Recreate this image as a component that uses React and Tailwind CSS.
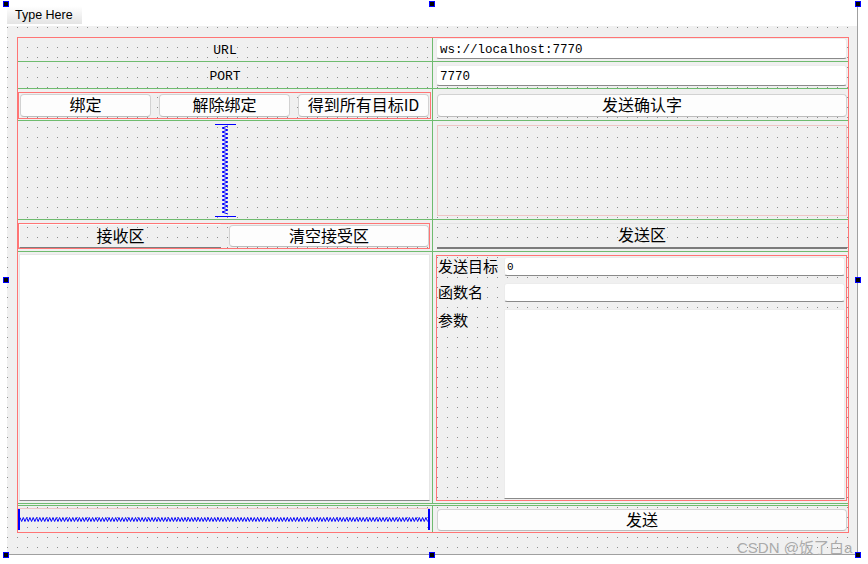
import React from "react";

const cjk = "font-['Noto_Sans_CJK_SC','Liberation_Sans',sans-serif]";
const mono = "font-['Liberation_Mono','Noto_Sans_CJK_SC',monospace]";

function Btn({ children, className = "" }) {
  return (
    <div
      className={
        "flex items-center justify-center pb-[3px] bg-[#fdfdfd] border border-[#d2d2d2] border-b-[#bcbcbc] rounded-[4px] text-[16px] leading-none text-black " +
        cjk +
        " " +
        className
      }
    >
      {children}
    </div>
  );
}

function LineEdit({ children, className = "" }) {
  return (
    <div
      className={
        "flex items-center bg-white border border-[#ececec] border-b-[#8a8a8a] rounded-[3px] text-black " +
        className
      }
    >
      {children}
    </div>
  );
}

function Handle({ className }) {
  return <div className={"absolute w-[6px] h-[6px] bg-black border border-[#0000ff] " + className} />;
}

function VSpacer() {
  const pts = [];
  for (let y = 3; y <= 92; y += 2) pts.push(`${y % 4 === 1 ? 7 : 13},${y}`);
  return (
    <svg width="21" height="95" viewBox="0 0 21 95" className="block">
      <line x1="0" y1="1.5" x2="21" y2="1.5" stroke="#0000ff" strokeWidth="1" />
      <line x1="0" y1="93.5" x2="21" y2="93.5" stroke="#0000ff" strokeWidth="1" />
      <polyline points={pts.join(" ")} fill="none" stroke="#0000ff" strokeWidth="1" />
    </svg>
  );
}

function HSpacer() {
  const pts = [];
  let up = true;
  for (let x = 2; x <= 410; x += 1.65) {
    pts.push(`${x.toFixed(2)},${up ? 8.5 : 12.5}`);
    up = !up;
  }
  return (
    <svg width="412" height="21" viewBox="0 0 412 21" className="block">
      <line x1="1" y1="0" x2="1" y2="21" stroke="#0000ff" strokeWidth="2" />
      <line x1="411" y1="0" x2="411" y2="21" stroke="#0000ff" strokeWidth="2" />
      <polyline points={pts.join(" ")} fill="none" stroke="#0000ff" strokeWidth="1" />
    </svg>
  );
}

const Hline = () => <div className="h-px bg-[#6fbb6f]" />;
const Vline = () => <div className="w-px bg-[#6fbb6f]" />;

export default function App() {
  return (
    <div className="relative w-[868px] h-[564px] bg-white overflow-hidden">
      <div className="ml-[6px] mt-[5px] w-[852px] h-[550px] pl-px border-r border-b border-[#a0a0a0] flex flex-col">
        {/* menu bar */}
        <div className="h-[21px] shrink-0">
          <div className="mt-px w-[75px] h-[18px] bg-gradient-to-b from-white to-[#e4e4e4] pl-[8px] flex items-center text-[12.5px] text-black font-['Liberation_Sans',sans-serif]">
            Type Here
          </div>
        </div>

        {/* designer canvas */}
        <div className="flex-1 bg-[#f0f0f0] bg-[conic-gradient(at_1px_1px,transparent_0_270deg,#8e8e8e_270deg)] bg-[length:10px_10px] bg-[position:0px_1px] pl-[10px] pt-[11px]">
          <div className="w-[832px] h-[496px] border border-[#ff7575] flex flex-col">
            {/* URL */}
            <div className="flex h-[23px]">
              <div className={"w-[414px] flex items-center justify-center pt-[3px] text-[13px] text-black " + mono}>URL</div>
              <Vline />
              <div className="flex-1">
                <LineEdit className={"ml-[3px] w-[411px] h-[21px] pl-[3px] pt-[3px] text-[12.5px] " + mono}>ws://localhost:7770</LineEdit>
              </div>
            </div>
            <Hline />

            {/* PORT */}
            <div className="flex h-[26px]">
              <div className={"w-[414px] flex items-center justify-center pt-[3px] text-[13px] text-black " + mono}>PORT</div>
              <Vline />
              <div className="flex-1">
                <LineEdit className={"ml-[3px] mt-[3px] w-[411px] h-[21px] pl-[3px] pt-[3px] text-[12.5px] " + mono}>7770</LineEdit>
              </div>
            </div>
            <Hline />

            {/* buttons */}
            <div className="flex h-[31px]">
              <div className="w-[414px]">
                <div className="mt-[3px] w-[413px] h-[27px] border border-[#ff7575] flex gap-[8px] px-px py-px">
                  <Btn className="flex-1">绑定</Btn>
                  <Btn className="flex-1">解除绑定</Btn>
                  <Btn className="flex-1">得到所有目标ID</Btn>
                </div>
              </div>
              <Vline />
              <div className="flex-1">
                <Btn className="ml-[4px] mt-[5px] w-[410px] h-[23px]">发送确认字</Btn>
              </div>
            </div>
            <Hline />

            {/* spacer row */}
            <div className="flex h-[98px]">
              <div className="w-[414px] flex justify-center pt-[2px]">
                <VSpacer />
              </div>
              <Vline />
              <div className="flex-1">
                <div className="ml-[4px] mt-[4px] w-[410px] h-[91px] border border-[#eec6c6]" />
              </div>
            </div>
            <Hline />

            {/* section titles */}
            <div className="flex h-[31px]">
              <div className="w-[414px]">
                <div className="mt-[3px] w-[412px] h-[26px] border border-[#ff7575] flex">
                  <div className={"w-[202px] h-full pb-[3px] border-t border-l border-[#fafafa] border-b border-b-[#7c7c7c] flex items-center justify-center text-[16px] leading-none text-black " + cjk}>
                    接收区
                  </div>
                  <Btn className="ml-[8px] mt-px w-[200px] h-[22px]">清空接受区</Btn>
                </div>
              </div>
              <Vline />
              <div className="flex-1">
                <div className={"ml-[4px] mt-[3px] w-[410px] h-[26px] pb-[3px] border-t border-[#e2e2e2] border-b-2 border-b-[#7c7c7c] flex items-center justify-center text-[16px] leading-none text-black " + cjk}>
                  发送区
                </div>
              </div>
            </div>
            <Hline />

            {/* text areas */}
            <div className="flex h-[251px]">
              <div className="w-[414px]">
                <div className="ml-px mt-[2px] w-[411px] h-[247px] bg-white border border-[#e6e6e6] border-b-[#8a8a8a]" />
              </div>
              <Vline />
              <div className="flex-1">
                <div className={"ml-[3px] mt-[3px] w-[411px] h-[246px] border border-[#ff7575] grid grid-cols-[67px_341px] content-start pt-px text-[15px] leading-none text-black " + cjk}>
                  <div className="h-[19px] pl-px pb-[3px] flex items-center">发送目标</div>
                  <LineEdit className={"h-[19px] pl-[2px] pt-[2px] text-[11px] " + mono}>0</LineEdit>
                  <div className="h-[7px]" />
                  <div className="h-[7px]" />
                  <div className="h-[19px] pl-px pb-[3px] flex items-center">函数名</div>
                  <LineEdit className="h-[19px]" />
                  <div className="h-[7px]" />
                  <div className="h-[7px]" />
                  <div className="pl-px pt-[3px]">参数</div>
                  <div className="h-[190px] bg-white border border-[#ececec] border-b-[#8a8a8a]" />
                </div>
              </div>
            </div>
            <Hline />
            <div className="h-px" />
            <Hline />

            {/* bottom row */}
            <div className="flex h-[26px]">
              <div className="w-[414px]">
                <div className="mt-[2px] w-[412px] h-[23px] border-t border-[#eec6c6] flex items-start">
                  <HSpacer />
                </div>
              </div>
              <Vline />
              <div className="flex-1">
                <Btn className="ml-[4px] mt-[3px] w-[410px] h-[22px]">发送</Btn>
              </div>
            </div>
          </div>
        </div>
      </div>

      {/* selection handles */}
      <Handle className="left-[3px] top-[1px]" />
      <Handle className="left-[429px] top-[1px]" />
      <Handle className="left-[855px] top-[1px]" />
      <Handle className="left-[3px] top-[277px]" />
      <Handle className="left-[855px] top-[277px]" />
      <Handle className="left-[3px] top-[552px]" />
      <Handle className="left-[429px] top-[552px]" />
      <Handle className="left-[855px] top-[552px]" />

      {/* watermark */}
      <div className="absolute left-[737px] top-[540px] text-[15px] leading-none text-[#ababab] font-['Liberation_Sans','Noto_Sans_CJK_SC',sans-serif]">
        CSDN @饭了白a
      </div>
    </div>
  );
}
